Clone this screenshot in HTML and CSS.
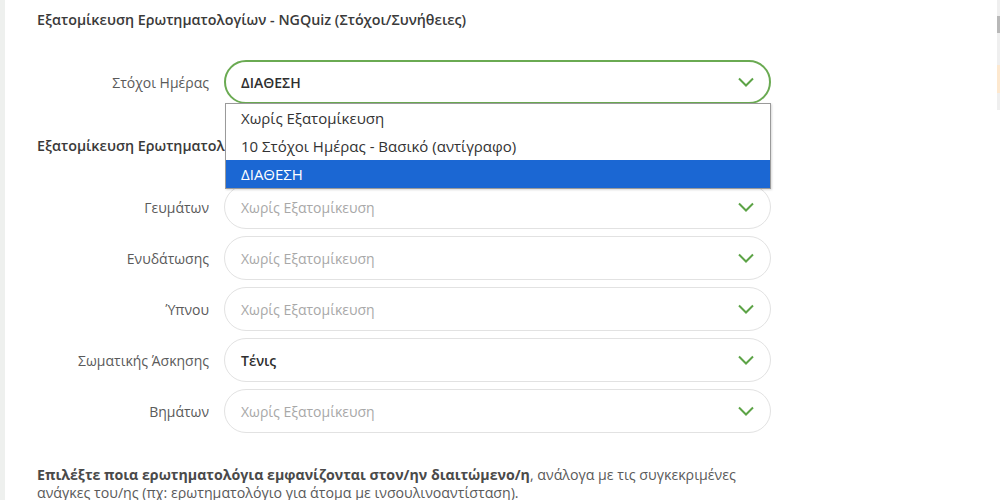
FILE: index.html
```
<!DOCTYPE html>
<html lang="el">
<head>
    <meta charset="UTF-8">
    <title>Εξατομίκευση Ερωτηματολογίων</title>
    <link rel="stylesheet" href="styles.css">
</head>
<body>
    <div class="side-strip"></div>
    <main class="panel">
        <h3 class="section-title">Εξατομίκευση Ερωτηματολογίων - NGQuiz (Στόχοι/Συνήθειες)</h3>

        <div class="form-row">
            <label class="form-label">Στόχοι Ημέρας</label>
            <div class="select-wrap">
                <div class="select select-open">
                    <span class="select-value">ΔΙΑΘΕΣΗ</span>
                    <svg class="chevron" viewBox="0 0 16 10" width="16" height="10"><path d="M1 1.5 L8 8.5 L15 1.5" fill="none" stroke="#5ca346" stroke-width="2"/></svg>
                </div>
                <ul class="dropdown">
                    <li>Χωρίς Εξατομίκευση</li>
                    <li>10 Στόχοι Ημέρας - Βασικό (αντίγραφο)</li>
                    <li class="selected">ΔΙΑΘΕΣΗ</li>
                </ul>
            </div>
        </div>

        <h3 class="section-title second">Εξατομίκευση Ερωτηματολογίων - Καταγραφές</h3>

        <div class="form-row tight">
            <label class="form-label">Γευμάτων</label>
            <div class="select">
                <span class="select-value placeholder">Χωρίς Εξατομίκευση</span>
                <svg class="chevron" viewBox="0 0 16 10" width="16" height="10"><path d="M1 1.5 L8 8.5 L15 1.5" fill="none" stroke="#5ca346" stroke-width="2"/></svg>
            </div>
        </div>
        <div class="form-row tight">
            <label class="form-label">Ενυδάτωσης</label>
            <div class="select">
                <span class="select-value placeholder">Χωρίς Εξατομίκευση</span>
                <svg class="chevron" viewBox="0 0 16 10" width="16" height="10"><path d="M1 1.5 L8 8.5 L15 1.5" fill="none" stroke="#5ca346" stroke-width="2"/></svg>
            </div>
        </div>
        <div class="form-row tight">
            <label class="form-label">Ύπνου</label>
            <div class="select">
                <span class="select-value placeholder">Χωρίς Εξατομίκευση</span>
                <svg class="chevron" viewBox="0 0 16 10" width="16" height="10"><path d="M1 1.5 L8 8.5 L15 1.5" fill="none" stroke="#5ca346" stroke-width="2"/></svg>
            </div>
        </div>
        <div class="form-row tight">
            <label class="form-label">Σωματικής Άσκησης</label>
            <div class="select">
                <span class="select-value">Τένις</span>
                <svg class="chevron" viewBox="0 0 16 10" width="16" height="10"><path d="M1 1.5 L8 8.5 L15 1.5" fill="none" stroke="#5ca346" stroke-width="2"/></svg>
            </div>
        </div>
        <div class="form-row tight">
            <label class="form-label">Βημάτων</label>
            <div class="select">
                <span class="select-value placeholder">Χωρίς Εξατομίκευση</span>
                <svg class="chevron" viewBox="0 0 16 10" width="16" height="10"><path d="M1 1.5 L8 8.5 L15 1.5" fill="none" stroke="#5ca346" stroke-width="2"/></svg>
            </div>
        </div>

        <p class="hint"><strong>Επιλέξτε ποια ερωτηματολόγια εμφανίζονται στον/ην διαιτώμενο/η</strong>, ανάλογα με τις συγκεκριμένες ανάγκες του/ης (πχ: ερωτηματολόγιο για άτομα με ινσουλινοαντίσταση).</p>
    </main>
    <div class="scroll-strip">
        <div class="scroll-thumb"></div>
        <div class="scroll-mark"></div>
    </div>
</body>
</html>
```

FILE: styles.css
```
:root {
    --text-color: #3a3a3a;
    --label-color: #5a5a5a;
    --muted-color: #a8a8a8;
    --green: #6aaa52;
    --border: #e2e2e2;
    --highlight: #1b67d3;
}

* {
    margin: 0;
    padding: 0;
    box-sizing: border-box;
}

body {
    font-family: 'Open Sans', 'Noto Sans', sans-serif;
    background: #ffffff;
    color: var(--text-color);
    width: 1000px;
    height: 500px;
    overflow: hidden;
    display: flex;
}

.side-strip {
    width: 5px;
    flex-shrink: 0;
    background: #eef0ee;
}

.panel {
    flex: 1;
    padding: 10px 0 0 32px;
}

.section-title {
    font-size: 14.3px;
    font-weight: 600;
    line-height: 20px;
    color: var(--text-color);
}

.section-title.second {
    margin: 32px 0 29px;
}

.form-row {
    display: flex;
    align-items: center;
    gap: 15px;
    margin-top: 30px;
}

.form-row.tight {
    margin-top: 7px;
}

.form-row.tight:first-of-type {
    margin-top: 0;
}

.form-label {
    width: 172px;
    text-align: right;
    font-size: 14px;
    color: var(--label-color);
}

.select-wrap {
    position: relative;
}

.select {
    width: 547px;
    height: 44px;
    border: 1px solid var(--border);
    border-radius: 22px;
    display: flex;
    align-items: center;
    justify-content: space-between;
    padding: 0 16px 0 16px;
    background: #fff;
}

.select-open {
    border: 2px solid var(--green);
    padding-left: 15px;
    padding-right: 15px;
}

.select-value {
    font-size: 14px;
    font-weight: 600;
    color: #2f2f2f;
}

.select-value.placeholder {
    font-weight: 400;
    color: var(--muted-color);
}

.chevron {
    display: block;
}

.dropdown {
    position: absolute;
    top: 43px;
    left: 1px;
    width: 546px;
    list-style: none;
    background: #fff;
    border: 1px solid #9a9a9a;
    box-shadow: 1px 1px 2px rgba(0, 0, 0, 0.15);
    z-index: 5;
}

.dropdown li {
    height: 28px;
    line-height: 28px;
    padding-left: 15px;
    font-size: 15px;
    color: #333;
}

.dropdown li.selected {
    background: var(--highlight);
    color: #fff;
}

.hint {
    margin-top: 33px;
    width: 700px;
    font-size: 14.2px;
    line-height: 18px;
    color: var(--label-color);
}

.hint strong {
    font-weight: 700;
    color: #4a4a4a;
}

.scroll-strip {
    position: absolute;
    top: 0;
    right: 0;
    width: 3px;
    height: 110px;
    background: #efefef;
}

.scroll-thumb {
    margin-top: 16px;
    height: 17px;
    background: #b8b8b8;
}

.scroll-mark {
    margin-top: 32px;
    height: 28px;
    background: #fde8cf;
}
```
